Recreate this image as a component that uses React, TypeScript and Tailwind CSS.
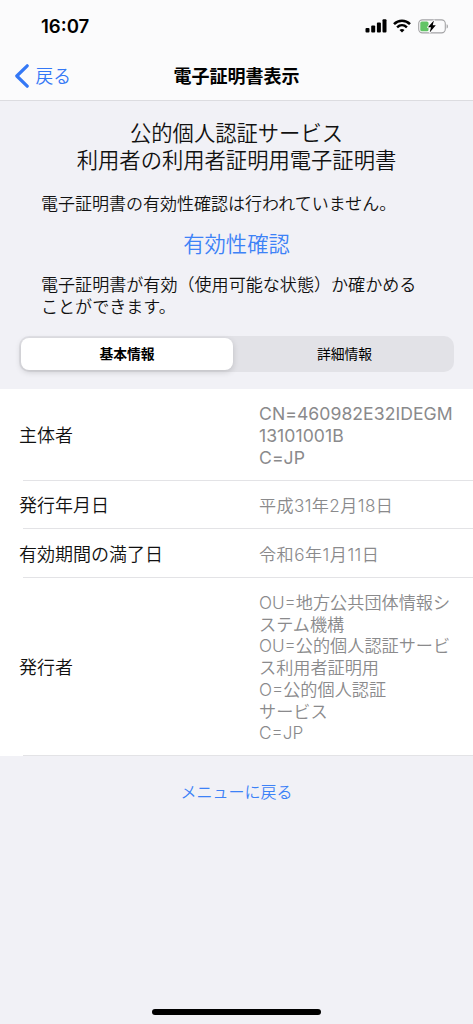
import { useState } from "react";
import clsx from "clsx";

const TABS = ["基本情報", "詳細情報"];

const ROWS = [
  {
    label: "主体者",
    lines: ["CN=460982E32IDEGM", "13101001B", "C=JP"],
    height: "h-[92px]",
    text: "text-[17.6px] font-normal tracking-[0.05px]",
  },
  {
    label: "発行年月日",
    lines: ["平成31年2月18日"],
    height: "h-[48px]",
    text: "text-[17.1px] font-[350] tracking-[0.4px]",
  },
  {
    label: "有効期間の満了日",
    lines: ["令和6年1月11日"],
    height: "h-[49px]",
    text: "text-[17.1px] font-[350] tracking-[0.5px]",
  },
  {
    label: "発行者",
    lines: [
      "OU=地方公共団体情報シ",
      "ステム機構",
      "OU=公的個人認証サービ",
      "ス利用者証明用",
      "O=公的個人認証",
      "サービス",
      "C=JP",
    ],
    height: "h-[178px]",
    text: "text-[17.15px] font-[350]",
  },
];

function SignalIcon() {
  return (
    <svg width="22" height="14" viewBox="0 0 22 14" fill="#000">
      <rect x="0.5" y="9" width="4" height="4.6" rx="1" />
      <rect x="6.2" y="6.6" width="4" height="7" rx="1" />
      <rect x="11.9" y="3.6" width="4" height="10" rx="1" />
      <rect x="17.5" y="0.3" width="4" height="13.3" rx="1" />
    </svg>
  );
}

function WifiIcon() {
  return (
    <svg width="18" height="14" viewBox="0 0 18 14" fill="none" stroke="#000">
      <path d="M1 5.1C5.6 0.7 12.4 0.7 17 5.1" strokeWidth="2.6" />
      <path d="M4.1 8.3C7 5.6 11 5.6 13.9 8.3" strokeWidth="2.5" />
      <path d="M9 13.4L6.5 10.9C7.9 9.6 10.1 9.6 11.5 10.9Z" fill="#000" stroke="none" />
    </svg>
  );
}

function BatteryIcon() {
  return (
    <svg width="31" height="15" viewBox="0 0 31 15">
      <rect x="0.7" y="0.9" width="26.6" height="13" rx="3.8" fill="none" stroke="#a3a3a5" strokeWidth="1.1" />
      <path d="M28.6 5.2C30.4 5.8 30.4 9 28.6 9.6Z" fill="#a3a3a5" />
      <rect x="2.3" y="2.5" width="8.2" height="9.8" rx="1.6" fill="#62c466" />
      <path
        d="M15.9 1.4L9.9 8.3H13L11.7 13.4L17.8 6.3H14.7Z"
        fill="#000"
        stroke="#fbfbfc"
        strokeWidth="1.6"
        paintOrder="stroke"
        strokeLinejoin="round"
      />
    </svg>
  );
}

function StatusBar() {
  return (
    <div className="flex h-[51px] items-center pt-px">
      <span className="ml-[41px] text-[18.6px] font-semibold leading-6">16:07</span>
      <div className="ml-auto mr-6 flex items-center">
        <SignalIcon />
        <span className="ml-[6px] flex">
          <WifiIcon />
        </span>
        <span className="ml-[7px] flex">
          <BatteryIcon />
        </span>
      </div>
    </div>
  );
}

function NavBar() {
  return (
    <div className="grid h-[49px] grid-cols-[1fr_auto_1fr] items-center pt-px">
      <button className="flex items-center pl-[14px] text-[#3478f6]">
        <svg width="16" height="24" viewBox="0 0 16 24" fill="none" stroke="currentColor" strokeWidth="3.2">
          <path d="M13.2 1.8L2.8 12L13.2 22.2" strokeLinecap="round" strokeLinejoin="round" />
        </svg>
        <span className="ml-[5.5px] pt-0.5 text-[17.8px] font-[350] leading-6">戻る</span>
      </button>
      <h1 className="pt-0.5 text-[18px] font-bold leading-6">電子証明書表示</h1>
    </div>
  );
}

export default function App() {
  const [tab, setTab] = useState(0);

  return (
    <div className="flex h-[1024px] w-[473px] flex-col bg-[#f1f1f6] font-['Inter','Noto_Sans_CJK_JP',sans-serif] text-[#111]">
      <header className="h-[101px] border-b border-[#dcdce0] bg-[#fbfbfc] text-black">
        <StatusBar />
        <NavBar />
      </header>

      <section className="h-[235px] font-[350]">
        <h2 className="pt-[19px] text-center text-[21.3px] leading-[27px]">
          公的個人認証サービス
          <br />
          利用者の利用者証明用電子証明書
        </h2>
        <p className="mt-[19px] pl-[41px] text-[17px] leading-[22px]">
          電子証明書の有効性確認は行われていません。
        </p>
        <button className="mt-4 block w-full text-center text-[21.3px] leading-[27px] text-[#3d82f7]">
          有効性確認
        </button>
        <p className="mt-4 pl-[41px] text-[17.07px] leading-[22px] [text-spacing-trim:space-all]">
          電子証明書が有効（使用可能な状態）か確かめる
          <br />
          ことができます。
        </p>
      </section>

      <div className="mx-[19px] flex h-9 rounded-[10px] bg-[#e2e2e7] p-0.5">
        {TABS.map((name, i) => (
          <button
            key={name}
            onClick={() => setTab(i)}
            className={clsx(
              "rounded-[8px] text-[13.8px] leading-5 text-black",
              i === 0 ? "w-[212px]" : "flex-1 pl-1",
              tab === i && "bg-white font-bold shadow-[0_2px_6px_rgba(0,0,0,0.16)]"
            )}
          >
            {name}
          </button>
        ))}
      </div>

      <dl className="mt-[17px] bg-white">
        {ROWS.map((row) => (
          <div key={row.label} className={clsx("flex flex-col", row.height)}>
            <div className="flex flex-1 items-center pl-[19px] pt-[3px]">
              <dt className="w-[240px] text-[18px] font-[350] leading-6">{row.label}</dt>
              <dd
                className={clsx(
                  "whitespace-nowrap leading-[21.8px] text-[#8a8a8c]",
                  row.text
                )}
              >
                {row.lines.map((line) => (
                  <div key={line}>{line}</div>
                ))}
              </dd>
            </div>
            <div className="ml-[23px] h-px bg-[#e3e3e6]" />
          </div>
        ))}
      </dl>

      <button className="mt-6 text-center text-[16px] font-[350] leading-6 text-[#3d82f7]">
        メニューに戻る
      </button>

      <div className="mx-auto mb-[9px] mt-auto h-1.5 w-[169px] rounded-full bg-black" />
    </div>
  );
}
